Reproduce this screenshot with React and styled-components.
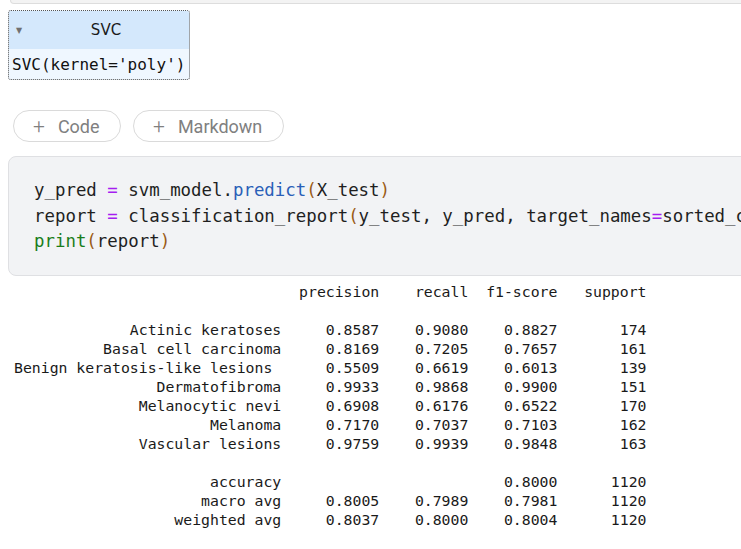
import React from "react";
import styled, { createGlobalStyle } from "styled-components";

const Global = createGlobalStyle`
  html, body { margin: 0; padding: 0; background: #ffffff; overflow: hidden; }
  body { width: 741px; height: 549px; font-family: Roboto, "Noto Sans", sans-serif; }
`;

const Page = styled.div`
  display: flex;
  flex-direction: column;
  width: 741px;
  overflow: hidden;
`;

const PrevCell = styled.div`
  height: 3px;
  margin-left: 10px;
  margin-right: -20px;
  background: #f3f3f3;
  border: 1px solid #dddddd;
  border-top: none;
  border-radius: 0 0 8px 8px;
`;

const Estimator = styled.div`
  align-self: flex-start;
  margin: 6px 0 0 8px;
  width: 180px;
  border: 1px dotted #555555;
  border-radius: 3px;
  overflow: hidden;
  background: #eff7ff;
`;

const EstHeader = styled.div`
  position: relative;
  height: 38px;
  display: flex;
  align-items: center;
  justify-content: center;
  padding-left: 14px;
  background: #d4e8fc;
  font-family: "DejaVu Sans", Verdana, sans-serif;
  font-size: 15px;
  color: #1a1a1a;
`;

const Caret = styled.span`
  position: absolute;
  left: 7px;
  top: 50%;
  transform: translateY(-50%);
  font-size: 8px;
  color: #707070;
`;

const EstBody = styled.div`
  height: 30px;
  display: flex;
  align-items: center;
  padding-left: 3px;
  font-family: "DejaVu Sans Mono", monospace;
  font-size: 16px;
  color: #111111;
  white-space: pre;
`;

const Toolbar = styled.div`
  display: flex;
  gap: 12px;
  margin: 30px 0 0 13px;
`;

const Pill = styled.button`
  height: 32px;
  width: ${(p) => p.$w}px;
  box-sizing: border-box;
  display: flex;
  align-items: center;
  gap: 13px;
  padding: 0 0 0 19px;
  border: 1px solid #dadada;
  border-radius: 16px;
  background: #ffffff;
  color: #808080;
  font-family: Roboto, "Noto Sans", sans-serif;
  font-size: 18px;
  cursor: pointer;
`;

const Plus = styled.span`
  font-size: 21px;
  line-height: 1;
  font-weight: 300;
`;

const CodeCell = styled.div`
  margin: 14px -40px 0 8px;
  padding: 21px 0 20px 25px;
  background: #f2f3f5;
  border: 1px solid #dfe0e3;
  border-radius: 8px;
  font-family: "DejaVu Sans Mono", monospace;
  font-size: 17.4px;
  line-height: 25.5px;
  color: #1f1f1f;
  white-space: pre;
`;

const CodeLine = styled.div``;

const Tok = styled.span`
  color: ${(p) =>
    p.$k === "op" ? "#a61ef0" : p.$k === "fn" ? "#2a5fb8" : p.$k === "bi" ? "#1a7d1a" : p.$k === "par" ? "#9a5b16" : "#1f1f1f"};
`;

const Output = styled.pre`
  margin: 6px 0 0 14px;
  font-family: "DejaVu Sans Mono", monospace;
  font-size: 14.8px;
  line-height: 19px;
  color: #1a1a1a;
`;

const W = 30;
const r9 = (s) => " " + String(s).padStart(9, " ");
const rows = [
  ["Actinic keratoses", "0.8587", "0.9080", "0.8827", "174"],
  ["Basal cell carcinoma", "0.8169", "0.7205", "0.7657", "161"],
  ["Benign keratosis-like lesions ", "0.5509", "0.6619", "0.6013", "139"],
  ["Dermatofibroma", "0.9933", "0.9868", "0.9900", "151"],
  ["Melanocytic nevi", "0.6908", "0.6176", "0.6522", "170"],
  ["Melanoma", "0.7170", "0.7037", "0.7103", "162"],
  ["Vascular lesions", "0.9759", "0.9939", "0.9848", "163"],
];

const report = [
  "".padStart(W) + " " + r9("precision") + r9("recall") + r9("f1-score") + r9("support"),
  "",
  ...rows.map((r) => r[0].padStart(W) + " " + r9(r[1]) + r9(r[2]) + r9(r[3]) + r9(r[4])),
  "",
  "accuracy".padStart(W) + " " + r9("") + r9("") + r9("0.8000") + r9("1120"),
  "macro avg".padStart(W) + " " + r9("0.8005") + r9("0.7989") + r9("0.7981") + r9("1120"),
  "weighted avg".padStart(W) + " " + r9("0.8037") + r9("0.8000") + r9("0.8004") + r9("1120"),
].join("\n");

export default function App() {
  return (
    <Page>
      <Global />
      <PrevCell />
      <Estimator>
        <EstHeader>
          <Caret>▼</Caret>
          SVC
        </EstHeader>
        <EstBody>SVC(kernel='poly')</EstBody>
      </Estimator>
      <Toolbar>
        <Pill $w={108}>
          <Plus>+</Plus>Code
        </Pill>
        <Pill $w={151}>
          <Plus>+</Plus>Markdown
        </Pill>
      </Toolbar>
      <CodeCell>
        <CodeLine>
          y_pred <Tok $k="op">=</Tok> svm_model.<Tok $k="fn">predict</Tok>
          <Tok $k="par">(</Tok>X_test<Tok $k="par">)</Tok>
        </CodeLine>
        <CodeLine>
          report <Tok $k="op">=</Tok> classification_report<Tok $k="par">(</Tok>y_test, y_pred, target_names
          <Tok $k="op">=</Tok>sorted_classes<Tok $k="par">)</Tok>
        </CodeLine>
        <CodeLine>
          <Tok $k="bi">print</Tok>
          <Tok $k="par">(</Tok>report<Tok $k="par">)</Tok>
        </CodeLine>
      </CodeCell>
      <Output>{report}</Output>
    </Page>
  );
}
